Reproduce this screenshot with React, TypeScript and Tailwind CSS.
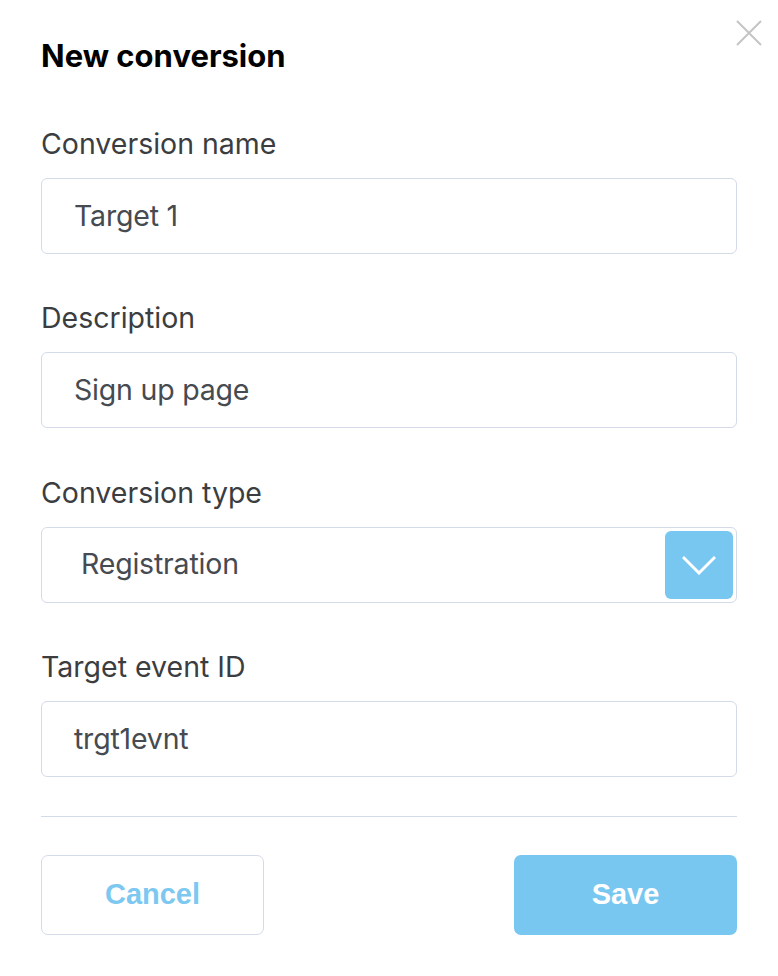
import React from "react";

function Field({ label, value }: { label: string; value: string }) {
  return (
    <div className="flex flex-col">
      <label className="text-[28.5px] leading-[32px] text-[#3b3d40]">{label}</label>
      <div className="mt-[18px] h-[76px] rounded-[6px] border border-[#d3dbe8] flex items-center pl-[32px] text-[28.5px] text-[#464a51] tracking-[-0.2px]">
        {value}
      </div>
    </div>
  );
}

export default function App() {
  return (
    <div
      className="relative w-[778px] h-[976px] bg-white px-[41px] pt-[38px]"
      style={{ fontFamily: "Inter, 'Noto Sans', sans-serif" }}
    >
      <button className="absolute right-[16px] top-[20px] w-[26px] h-[26px]" aria-label="Close">
        <svg viewBox="0 0 26 26" className="w-[26px] h-[26px]">
          <path d="M1 1L25 25M25 1L1 25" stroke="#c4c4c4" strokeWidth="2" fill="none" />
        </svg>
      </button>

      <h1 className="text-[31px] leading-[36px] font-bold text-black">New conversion</h1>

      <div className="mt-[54px] flex flex-col gap-[48.3px]">
        <Field label="Conversion name" value="Target 1" />
        <Field label="Description" value="Sign up page" />
        <div className="flex flex-col">
          <label className="text-[28.5px] leading-[32px] text-[#3b3d40]">Conversion type</label>
          <div className="mt-[18px] h-[76px] rounded-[6px] border border-[#d3dbe8] flex items-center justify-between pl-[39px] pr-[3px] text-[28.5px] text-[#464a51] tracking-[-0.2px]">
            <span>Registration</span>
            <div className="w-[68px] h-[68px] rounded-[6px] bg-[#78c7f1] flex items-center justify-center">
              <svg viewBox="0 0 34 20" className="w-[34px] h-[20px]">
                <path d="M1 2L17 18L33 2" stroke="white" strokeWidth="3" fill="none" />
              </svg>
            </div>
          </div>
        </div>
        <Field label="Target event ID" value="trgt1evnt" />
      </div>

      <div className="mt-[39px] h-px bg-[#d3dbe8]" />

      <div
        className="mt-[38px] flex justify-between"
        style={{ fontFamily: "'Liberation Sans', Arial, sans-serif" }}
      >
        <button className="w-[223px] h-[80px] rounded-[7px] border border-[#d3dbe8] text-[29px] font-bold text-[#7cc8f1]">
          Cancel
        </button>
        <button className="w-[223px] h-[80px] rounded-[7px] bg-[#78c7f1] text-[29px] font-bold text-white">
          Save
        </button>
      </div>
    </div>
  );
}
